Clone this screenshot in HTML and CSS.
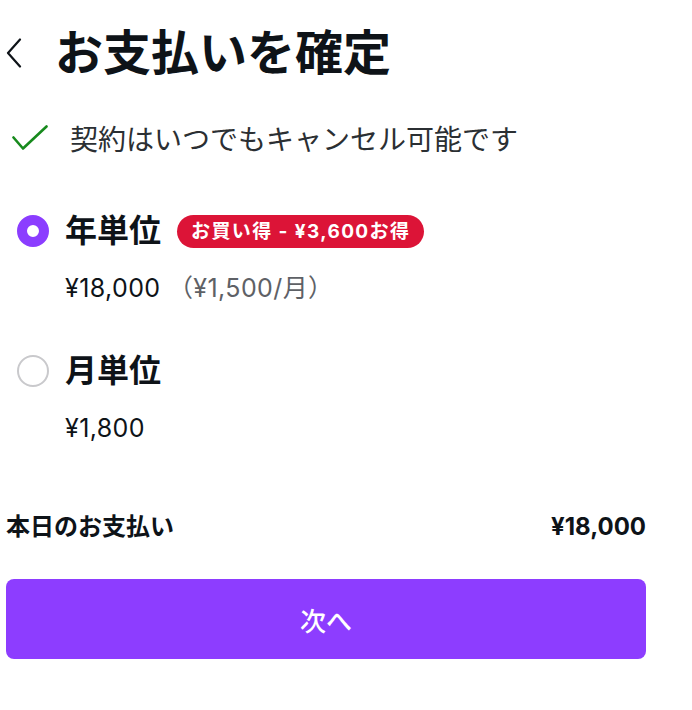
FILE: index.html
```html
<!DOCTYPE html>
<html lang="ja">
<head>
  <meta charset="UTF-8">
  <title>お支払いを確定</title>
  <link rel="stylesheet" href="styles.css">
</head>
<body>
<div class="page">

  <div class="header">
    <button class="back" aria-label="戻る">
      <svg width="16" height="30" viewBox="0 0 16 30">
        <polyline points="14,1.5 2,15 14,28.5" fill="none" stroke="#0e1318" stroke-width="2.2" stroke-linecap="round" stroke-linejoin="round"/>
      </svg>
    </button>
    <h1>お支払いを確定</h1>
  </div>

  <div class="note">
    <svg class="check" width="36" height="26" viewBox="0 0 36 26">
      <polyline points="1.5,12.5 11,23.5 34.5,1.5" fill="none" stroke="#178a1d" stroke-width="2.6" stroke-linecap="round" stroke-linejoin="round"/>
    </svg>
    <span>契約はいつでもキャンセル可能です</span>
  </div>

  <label class="plan">
    <input type="radio" name="plan" value="year" checked>
    <div class="plan-head">
      <span class="plan-name">年単位</span>
      <span class="badge">お買い得 - ¥3,600お得</span>
    </div>
    <div class="plan-price">¥18,000 <span class="per-month">（¥1,500/月）</span></div>
  </label>

  <label class="plan">
    <input type="radio" name="plan" value="month">
    <div class="plan-head">
      <span class="plan-name">月単位</span>
    </div>
    <div class="plan-price">¥1,800</div>
  </label>

  <div class="total">
    <span>本日のお支払い</span>
    <span>¥18,000</span>
  </div>

  <button class="next">次へ</button>

</div>
</body>
</html>
```

FILE: styles.css
```css
body {
  margin: 0;
  font-family: Inter, "Noto Sans CJK JP", sans-serif;
  color: #0e1318;
  background: white;
}
.page {
  width: 640px;
  padding: 21px 0 0 6px;
}
.header {
  display: flex;
  align-items: center;
  height: 64px;
}
.back {
  background: none;
  border: none;
  padding: 0;
  margin-right: 33px;
  display: flex;
  cursor: pointer;
}
h1 {
  margin: 0;
  font-size: 48px;
  font-weight: 700;
  line-height: 64px;
}
.note {
  display: flex;
  align-items: center;
  margin-top: 33px;
  height: 40px;
  font-size: 28px;
  color: #2b2f33;
}
.check {
  margin-left: 6px;
  margin-right: 22px;
}
.plan {
  display: grid;
  grid-template-columns: 32px 1fr;
  column-gap: 16px;
  row-gap: 19px;
  align-items: center;
  padding-left: 11px;
  margin-top: 51px;
  cursor: pointer;
}
.plan + .plan {
  margin-top: 45px;
}
.plan input {
  appearance: none;
  margin: 0;
  width: 32px;
  height: 32px;
  border-radius: 50%;
  border: 2px solid #c9c9cc;
  box-sizing: border-box;
}
.plan input:checked {
  border: 10px solid #8b3dff;
}
.plan-head {
  display: flex;
  align-items: center;
  gap: 16px;
  height: 44px;
}
.plan-name {
  font-size: 32px;
  font-weight: 700;
  line-height: 44px;
}
.badge {
  background: #dc1437;
  color: white;
  font-size: 19px;
  font-weight: 700;
  letter-spacing: 1.4px;
  height: 33px;
  line-height: 33px;
  padding: 0 14px;
  border-radius: 17px;
}
.plan-price {
  grid-column: 2;
  font-size: 25px;
  letter-spacing: 0.4px;
  line-height: 32px;
}
.per-month {
  color: #5e6166;
}
.total {
  display: flex;
  justify-content: space-between;
  margin-top: 67px;
  font-size: 24px;
  font-weight: 700;
  line-height: 32px;
}
.next {
  display: block;
  width: 640px;
  height: 80px;
  margin-top: 36px;
  border: none;
  border-radius: 8px;
  background: #8d3dff;
  color: white;
  font-family: inherit;
  font-size: 26px;
  font-weight: 500;
  cursor: pointer;
}
```
